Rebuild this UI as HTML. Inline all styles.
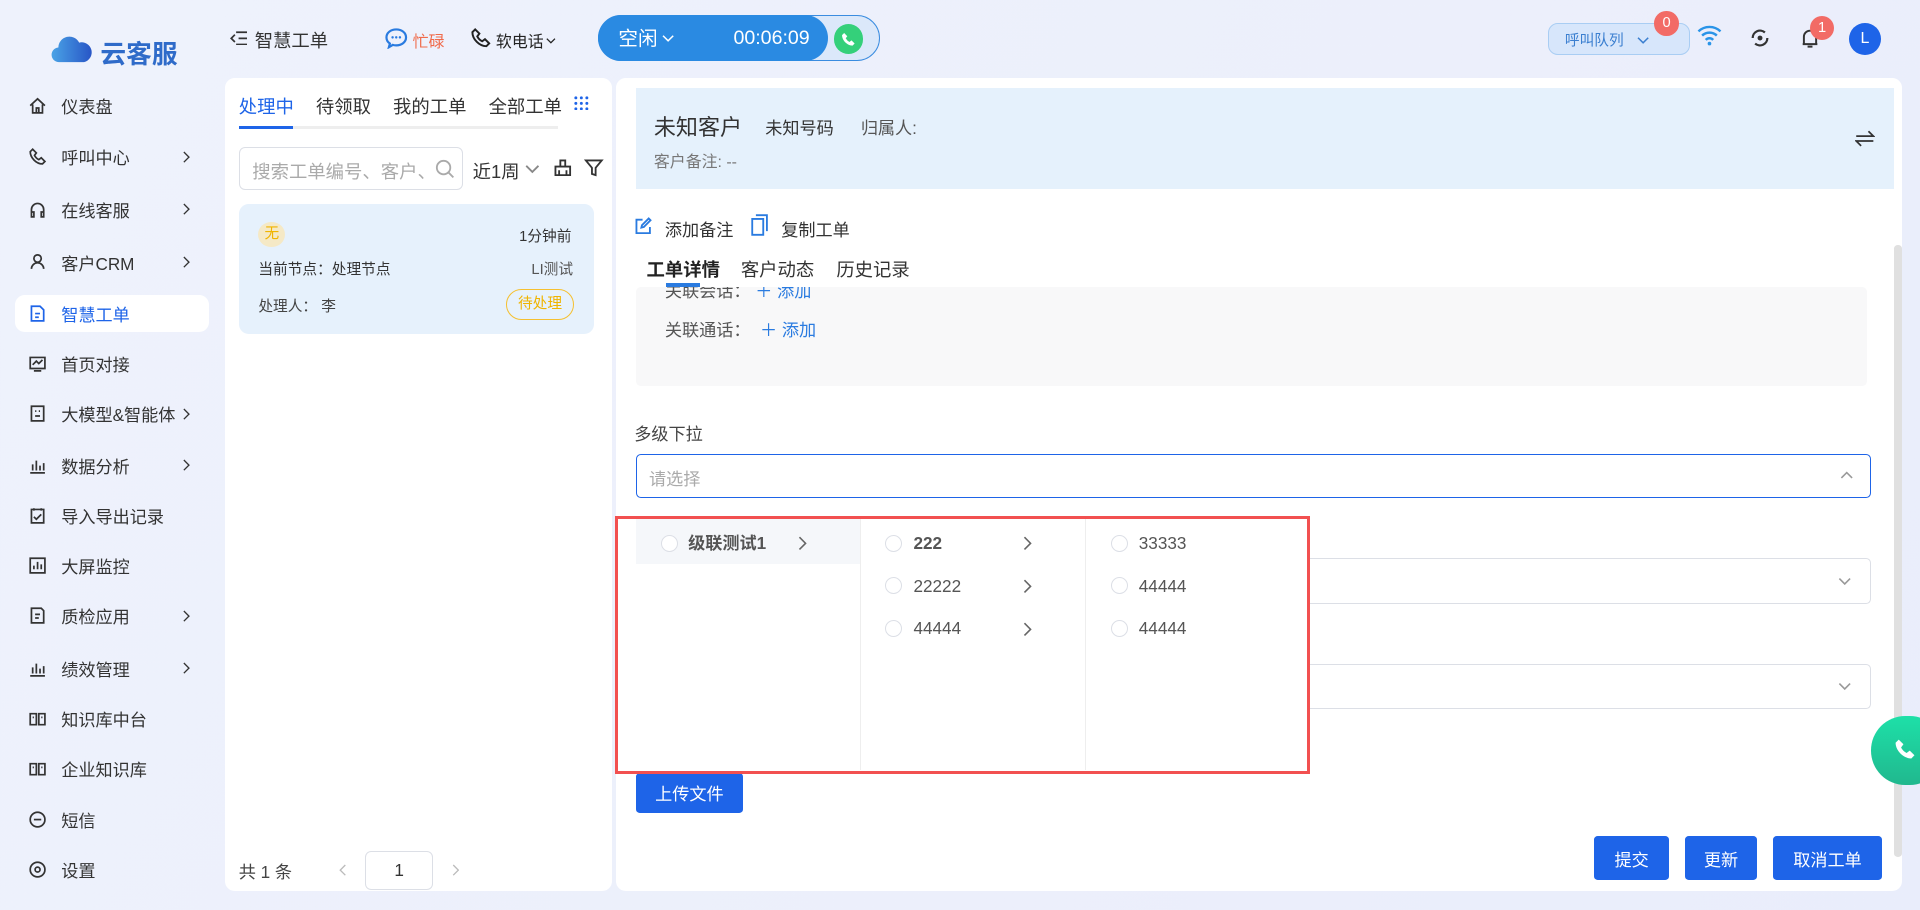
<!DOCTYPE html>
<html><head><meta charset="utf-8"><style>
*{box-sizing:border-box;margin:0;padding:0}
html,body{width:1920px;height:910px;overflow:hidden}
body{background:linear-gradient(120deg,#eef2fc,#eceffb 60%,#e9edfb);font-family:"Liberation Sans","Noto Sans CJK SC",sans-serif;color:#333}
#r{zoom:1.22449;width:1568px;height:743px;position:relative}
.a{position:absolute}
.t{position:absolute;white-space:nowrap}
.nav{position:absolute;left:12px;width:159px;height:30px;font-size:14px;color:#333;display:flex;align-items:center;padding-left:12px}
.nav svg{width:14px;height:14px;margin-right:12px;stroke:#333;fill:none;stroke-width:1.4}
.nav .ch{position:absolute;left:136px;top:10px;width:8px;height:10px;margin:0}
.btn{position:absolute;background:#1e64e8;color:#fff;font-size:14px;border-radius:3px;display:flex;align-items:center;justify-content:center}
.rad{position:absolute;width:14px;height:14px;border:1px solid #dcdfe6;border-radius:50%;background:#fff}
.opt{position:absolute;font-size:14px;color:#555}
.cr{position:absolute;width:8px;height:12px}
</style></head><body><div id="r">
<svg width="0" height="0" style="position:absolute"><defs><symbol id="R" viewBox="0 0 8 12"><path d="M2 1l5 5-5 5" fill="none" stroke="currentColor" stroke-width="1.3"/></symbol><symbol id="D" viewBox="0 0 12 8"><path d="M1 1.5l5 5 5-5" fill="none" stroke="currentColor" stroke-width="1.5"/></symbol></defs></svg>
<!-- logo -->
<svg class="a" style="left:42px;top:28px" width="34" height="24" viewBox="0 0 34 24"><defs><linearGradient id="g" x1="0" x2="1"><stop offset="0" stop-color="#4aa3e6"/><stop offset="1" stop-color="#2856c6"/></linearGradient></defs><path d="M7 23a6 6 0 0 1-1-12 9 9 0 0 1 17-4 7 7 0 0 1 4 16z" fill="url(#g)"/></svg>
<div class="t" style="left:82px;top:28px;font-size:21px;font-weight:bold;color:#2f6bc9">云客服</div>
<svg class="a" style="left:188px;top:25px" width="14" height="12" viewBox="0 0 14 12"><path d="M5 1h9M7 6h7M5 11h9M4 3L1 6l3 3" fill="none" stroke="#333" stroke-width="1.4"/></svg>
<div class="t" style="left:208px;top:22px;font-size:15px;color:#333">智慧工单</div>
<svg class="a" style="left:314px;top:22px" width="20" height="18" viewBox="0 0 20 18"><path d="M10 2c4.5 0 8 2.7 8 6.5S14.5 15 10 15c-1 0-2-.1-2.8-.4L4 16.5l.8-3A6 6 0 0 1 2 8.5C2 4.7 5.5 2 10 2z" fill="none" stroke="#2a7be0" stroke-width="1.8"/><circle cx="7" cy="8.5" r="1" fill="#2a7be0"/><circle cx="10" cy="8.5" r="1" fill="#2a7be0"/><circle cx="13" cy="8.5" r="1" fill="#2a7be0"/></svg>
<div class="t" style="left:337px;top:24px;font-size:13px;color:#f06a4a">忙碌</div>
<svg class="a" style="left:385px;top:23px" width="16" height="16" viewBox="0 0 14 14"><path d="M3 1l3 3-1.5 2a8 8 0 0 0 3.5 3.5L10 8l3 3-2 2C6 13 1 8 1 3z" fill="none" stroke="#222" stroke-width="1.4"/></svg>
<div class="t" style="left:405px;top:24px;font-size:13px;color:#222">软电话</div>
<svg class="a" style="left:446px;top:30px;color:#222" width="8" height="6"><use href="#D"/></svg>
<div class="a" style="left:488px;top:12px;width:231px;height:38px;border-radius:19px;background:#dbe8fa;border:1px solid #3a8ce0"></div>
<div class="a" style="left:488px;top:12px;width:188px;height:38px;border-radius:19px;background:#2a8ae2"></div>
<div class="t" style="left:505px;top:18px;font-size:16px;color:#fff">空闲</div>
<svg class="a" style="left:541px;top:28px;color:#fff" width="10" height="7"><use href="#D"/></svg>
<div class="t" style="left:599px;top:22px;font-size:16px;color:#fff">00:06:09</div>
<div class="a" style="left:681px;top:20px;width:24px;height:24px;border-radius:50%;background:#34d07a"></div>
<svg class="a" style="left:687px;top:26px" width="12" height="12" viewBox="0 0 14 14"><path d="M3 1l3 3-1.5 2a8 8 0 0 0 3.5 3.5L10 8l3 3-2 2C6 13 1 8 1 3z" fill="#fff"/></svg>
<!-- right header -->
<div class="a" style="left:1264px;top:19px;width:116px;height:26px;border-radius:8px;background:#d7e6fb;border:1px solid #a9cdf3"></div>
<div class="t" style="left:1278px;top:24px;font-size:12px;color:#3b7fd0">呼叫队列</div>
<svg class="a" style="left:1337px;top:29px;color:#3b7fd0" width="10" height="7"><use href="#D"/></svg>
<div class="a" style="left:1351px;top:9px;width:20px;height:20px;border-radius:50%;background:#f26b66;color:#fff;font-size:12px;text-align:center;line-height:20px">0</div>
<svg class="a" style="left:1385px;top:20px" width="22" height="18" viewBox="0 0 22 18"><path d="M2 6a13 13 0 0 1 18 0M5 9.5a8.5 8.5 0 0 1 12 0M8 13a4 4 0 0 1 6 0" fill="none" stroke="#2a94e8" stroke-width="2"/><circle cx="11" cy="16" r="1.5" fill="#2a94e8"/></svg>
<svg class="a" style="left:1428px;top:22px" width="18" height="18" viewBox="0 0 18 18"><path d="M3 9a6 6 0 0 1 10-4.5M15 9a6 6 0 0 1-10 4.5" fill="none" stroke="#333" stroke-width="1.8"/><circle cx="9" cy="9" r="2" fill="#333"/></svg>
<svg class="a" style="left:1469px;top:22px" width="18" height="18" viewBox="0 0 18 18"><path d="M4 14V8a5 5 0 0 1 10 0v6H3h12M7 16h4" fill="none" stroke="#333" stroke-width="1.6"/></svg>
<div class="a" style="left:1478px;top:13px;width:20px;height:20px;border-radius:50%;background:#f26b66;color:#fff;font-size:12px;text-align:center;line-height:20px">1</div>
<div class="a" style="left:1510px;top:19px;width:26px;height:26px;border-radius:50%;background:#1e64e8;color:#fff;font-size:13px;text-align:center;line-height:26px">L</div>
<!-- sidebar -->
<div class="a" style="left:12px;top:241px;width:159px;height:30px;border-radius:8px;background:#fff"></div>
<div class="nav" style="top:71px"><svg viewBox="0 0 14 14"><path d="M1 7L7 1.5 13 7M3 6v7h8V6M6 13V9h2v4"/></svg>仪表盘</div>
<div class="nav" style="top:113px"><svg viewBox="0 0 14 14"><path d="M3 1l3 3-1.5 2a8 8 0 0 0 3.5 3.5L10 8l3 3-2 2C6 13 1 8 1 3z"/></svg>呼叫中心<svg class="ch" style="color:#333"><use href="#R"/></svg></div>
<div class="nav" style="top:156px"><svg viewBox="0 0 14 14"><path d="M2 12V7a5 5 0 0 1 10 0v5M2 9h2v4H2zM10 9h2v4h-2z"/></svg>在线客服<svg class="ch"><use href="#R"/></svg></div>
<div class="nav" style="top:199px"><svg viewBox="0 0 14 14"><circle cx="7" cy="4.5" r="3"/><path d="M2 13a5 5 0 0 1 10 0"/></svg>客户CRM<svg class="ch"><use href="#R"/></svg></div>
<div class="nav" style="top:241px;color:#1e64e8"><svg viewBox="0 0 14 14" style="stroke:#1e64e8"><path d="M2 1h7l3 3v9H2zM5 7h4M5 10h3"/></svg>智慧工单</div>
<div class="nav" style="top:282px"><svg viewBox="0 0 14 14"><path d="M1 2h12v9H1zM4 13h6M3 8l3-3 2 2 3-3"/></svg>首页对接</div>
<div class="nav" style="top:323px"><svg viewBox="0 0 14 14"><path d="M2 1h10v12H2zM5 5h1M8 5h1M5 9h4"/></svg>大模型&amp;智能体<svg class="ch"><use href="#R"/></svg></div>
<div class="nav" style="top:365px"><svg viewBox="0 0 14 14"><path d="M1 13h12M3 11V6M6 11V3M9 11V7M12 11V5"/></svg>数据分析<svg class="ch"><use href="#R"/></svg></div>
<div class="nav" style="top:406px"><svg viewBox="0 0 14 14"><path d="M2 2h10v11H2zM4 1v2M10 1v2M4 8l2 2 4-4"/></svg>导入导出记录</div>
<div class="nav" style="top:447px"><svg viewBox="0 0 14 14"><path d="M1 1h12v12H1zM4 10V7M7 10V4M10 10V6"/></svg>大屏监控</div>
<div class="nav" style="top:488px"><svg viewBox="0 0 14 14"><path d="M2 1h8l2 2v10H2zM5 6h4M5 9h3"/></svg>质检应用<svg class="ch"><use href="#R"/></svg></div>
<div class="nav" style="top:531px"><svg viewBox="0 0 14 14"><path d="M1 13h12M3 11V6M6 11V3M9 11V7M12 11V5"/></svg>绩效管理<svg class="ch"><use href="#R"/></svg></div>
<div class="nav" style="top:572px"><svg viewBox="0 0 14 14"><path d="M1 3h5v9H1zM8 3h5v9H8zM3 6h1M10 6h1"/></svg>知识库中台</div>
<div class="nav" style="top:613px"><svg viewBox="0 0 14 14"><path d="M1 3h5v9H1zM8 3h5v9H8zM3 6h1M10 6h1"/></svg>企业知识库</div>
<div class="nav" style="top:654px"><svg viewBox="0 0 14 14"><circle cx="7" cy="7" r="6"/><path d="M4 7h6"/></svg>短信</div>
<div class="nav" style="top:695px"><svg viewBox="0 0 14 14"><circle cx="7" cy="7" r="6"/><circle cx="7" cy="7" r="2"/></svg>设置</div>
<!-- middle panel -->
<div class="a" style="left:184px;top:64px;width:316px;height:664px;background:#fff;border-radius:8px"></div>
<div class="t" style="left:195px;top:76px;font-size:15px;color:#1e64e8">处理中</div>
<div class="t" style="left:258px;top:76px;font-size:15px">待领取</div>
<div class="t" style="left:321px;top:76px;font-size:15px">我的工单</div>
<div class="t" style="left:399px;top:76px;font-size:15px">全部工单</div>
<svg class="a" style="left:469px;top:78px" width="12" height="12" viewBox="0 0 12 12" fill="#1e64e8"><circle cx="1.5" cy="1.5" r="1.2"/><circle cx="6" cy="1.5" r="1.2"/><circle cx="10.5" cy="1.5" r="1.2"/><circle cx="1.5" cy="6" r="1.2"/><circle cx="6" cy="6" r="1.2"/><circle cx="10.5" cy="6" r="1.2"/><circle cx="1.5" cy="10.5" r="1.2"/><circle cx="6" cy="10.5" r="1.2"/><circle cx="10.5" cy="10.5" r="1.2"/></svg>
<div class="a" style="left:195px;top:103px;width:261px;height:2px;background:#eee"></div>
<div class="a" style="left:195px;top:103px;width:44px;height:2px;background:#1e64e8"></div>
<div class="a" style="left:195px;top:120px;width:183px;height:35px;border:1px solid #dcdfe6;border-radius:5px"></div>
<div class="t" style="left:206px;top:129px;font-size:15px;color:#aaa">搜索工单编号、客户、</div>
<svg class="a" style="left:355px;top:130px" width="16" height="16" viewBox="0 0 16 16"><circle cx="7" cy="7" r="5.5" fill="none" stroke="#aaa" stroke-width="1.5"/><path d="M11 11l4 4" stroke="#aaa" stroke-width="1.5"/></svg>
<div class="t" style="left:386px;top:129px;font-size:15px">近1周</div>
<svg class="a" style="left:429px;top:134px;color:#888" width="12" height="8"><use href="#D"/></svg>
<svg class="a" style="left:452px;top:129px" width="16" height="16" viewBox="0 0 16 16"><path d="M6 2h4v5H6zM2 7h12v7H2zM5 10v4M11 10v4" fill="none" stroke="#333" stroke-width="1.5"/></svg>
<svg class="a" style="left:477px;top:129px" width="16" height="16" viewBox="0 0 16 16"><path d="M1.5 2h13l-5 6v6l-3-1V8z" fill="none" stroke="#333" stroke-width="1.5"/></svg>
<div class="a" style="left:195px;top:167px;width:290px;height:106px;background:#e6f1fc;border-radius:8px"></div>
<div class="a" style="left:211px;top:181px;width:22px;height:21px;border-radius:50%;background:#f5e9c6;color:#f0b400;font-size:12px;text-align:center;line-height:21px">无</div>
<div class="t" style="left:424px;top:184px;font-size:12px">1分钟前</div>
<div class="t" style="left:211px;top:211px;font-size:12px">当前节点：处理节点</div>
<div class="t" style="left:434px;top:211px;font-size:12px;color:#555">LI测试</div>
<div class="t" style="left:211px;top:241px;font-size:12px;color:#444">处理人： 李</div>
<div class="a" style="left:413px;top:236px;width:56px;height:25px;border:1px solid #f5c030;border-radius:13px;color:#f0b400;font-size:12px;text-align:center;line-height:23px">待处理</div>
<div class="t" style="left:195px;top:701px;font-size:14px;color:#444">共 1 条</div>
<svg class="a" style="left:277px;top:706px;color:#bbb;transform:scaleX(-1)" width="7" height="10"><use href="#R"/></svg>
<div class="a" style="left:298px;top:695px;width:56px;height:32px;border:1px solid #dcdfe6;border-radius:5px;text-align:center;line-height:30px;font-size:14px">1</div>
<svg class="a" style="left:368px;top:706px;color:#bbb" width="7" height="10"><use href="#R"/></svg>
<!-- right panel -->
<div class="a" style="left:503px;top:64px;width:1050px;height:664px;background:#fff;border-radius:8px"></div>
<div class="a" style="left:519px;top:72px;width:1028px;height:82px;background:#e5f1fc"></div>
<div class="t" style="left:534px;top:90px;font-size:18px;color:#333">未知客户</div>
<div class="t" style="left:625px;top:93px;font-size:14px;color:#333">未知号码</div>
<div class="t" style="left:703px;top:93px;font-size:14px;color:#555">归属人:</div>
<div class="t" style="left:534px;top:122px;font-size:13px;color:#777">客户备注: --</div>
<svg class="a" style="left:1515px;top:106px" width="16" height="14" viewBox="0 0 16 14"><path d="M1 5h14L11 1M15 9H1l4 4" fill="none" stroke="#333" stroke-width="1.4"/></svg>
<div class="a" style="left:1547px;top:200px;width:6px;height:500px;background:#e0e0e0;border-radius:3px"></div>
<svg class="a" style="left:518px;top:176px" width="16" height="16" viewBox="0 0 16 16"><path d="M13 9v5H2V3h5M8 9l-2 .5.5-2L12 2l1.5 1.5z" fill="none" stroke="#2a7be0" stroke-width="1.5"/></svg>
<div class="t" style="left:543px;top:176px;font-size:14px">添加备注</div>
<svg class="a" style="left:613px;top:175px" width="14" height="18" viewBox="0 0 14 18"><path d="M4 1h9v13M1 4h9v13H1z" fill="none" stroke="#2a7be0" stroke-width="1.5"/></svg>
<div class="t" style="left:638px;top:176px;font-size:14px">复制工单</div>
<div class="t" style="left:528px;top:209px;font-size:15px;font-weight:bold;color:#222">工单详情</div>
<div class="a" style="left:544px;top:231px;width:28px;height:3px;background:#2a7be0"></div>
<div class="t" style="left:605px;top:209px;font-size:15px">客户动态</div>
<div class="t" style="left:683px;top:209px;font-size:15px">历史记录</div>
<div class="a" style="left:519px;top:234px;width:1006px;height:81px;background:#f8f8f9;border-radius:4px;overflow:hidden">
<div class="t" style="left:24px;top:-8px;font-size:14px;color:#555">关联会话： <span style="color:#2a7be0">＋ 添加</span></div>
<div class="t" style="left:24px;top:24px;font-size:14px;color:#555">关联通话： &nbsp;<span style="color:#2a7be0">＋ 添加</span></div></div>
<div class="t" style="left:518px;top:343px;font-size:14px;color:#444">多级下拉</div>
<div class="a" style="left:519px;top:371px;width:1009px;height:36px;border:1px solid #1e64e8;border-radius:4px"></div>
<div class="t" style="left:530px;top:380px;font-size:14px;color:#aaa">请选择</div>
<svg class="a" style="left:1503px;top:385px;color:#999;transform:scaleY(-1)" width="11" height="7"><use href="#D"/></svg>
<div class="a" style="left:1069px;top:456px;width:459px;height:37px;border:1px solid #dcdfe6;border-left:none;border-radius:0 4px 4px 0"></div>
<svg class="a" style="left:1501px;top:471px;color:#999" width="11" height="7"><use href="#D"/></svg>
<div class="a" style="left:1069px;top:542px;width:459px;height:37px;border:1px solid #dcdfe6;border-left:none;border-radius:0 4px 4px 0"></div>
<svg class="a" style="left:1501px;top:557px;color:#999" width="11" height="7"><use href="#D"/></svg>
<div class="btn" style="left:519px;top:631px;width:88px;height:33px">上传文件</div>
<div class="btn" style="left:1302px;top:683px;width:61px;height:36px">提交</div>
<div class="btn" style="left:1376px;top:683px;width:59px;height:36px">更新</div>
<div class="btn" style="left:1448px;top:683px;width:89px;height:36px">取消工单</div>
<div class="a" style="left:1528px;top:585px;width:60px;height:56px;border-radius:28px;background:linear-gradient(#1ee0a8,#20b88e)"></div>
<svg class="a" style="left:1547px;top:603px" width="18" height="18" viewBox="0 0 14 14"><path d="M3 1l3 3-1.5 2a8 8 0 0 0 3.5 3.5L10 8l3 3-2 2C6 13 1 8 1 3z" fill="#fff"/></svg>
<!-- cascader -->
<div class="a" style="left:502px;top:421px;width:568px;height:211px;border:3px solid #f25050;background:#fff"></div>
<div class="a" style="left:519px;top:424px;width:184px;height:37px;background:#f5f7fa"></div>
<div class="a" style="left:702px;top:424px;width:1px;height:205px;background:#eee"></div>
<div class="a" style="left:886px;top:424px;width:1px;height:205px;background:#eee"></div>
<div class="rad" style="left:540px;top:437px"></div><div class="opt" style="left:562px;top:432px;font-weight:bold">级联测试1</div><svg class="cr" style="left:651px;top:438px;color:#666"><use href="#R"/></svg>
<div class="rad" style="left:723px;top:437px"></div><div class="opt" style="left:746px;top:435px;font-weight:bold">222</div><svg class="cr" style="left:835px;top:438px;color:#666"><use href="#R"/></svg>
<div class="rad" style="left:723px;top:471px"></div><div class="opt" style="left:746px;top:470px">22222</div><svg class="cr" style="left:835px;top:473px;color:#666"><use href="#R"/></svg>
<div class="rad" style="left:723px;top:506px"></div><div class="opt" style="left:746px;top:505px">44444</div><svg class="cr" style="left:835px;top:508px;color:#666"><use href="#R"/></svg>
<div class="rad" style="left:907px;top:437px"></div><div class="opt" style="left:930px;top:435px">33333</div>
<div class="rad" style="left:907px;top:471px"></div><div class="opt" style="left:930px;top:470px">44444</div>
<div class="rad" style="left:907px;top:506px"></div><div class="opt" style="left:930px;top:505px">44444</div>
</div></body></html>
